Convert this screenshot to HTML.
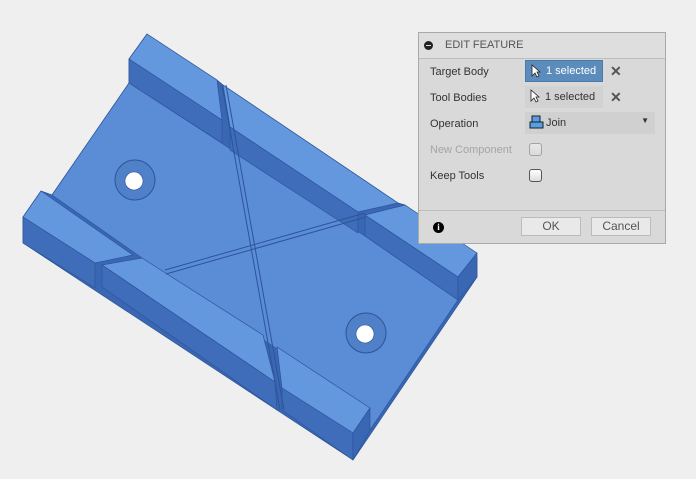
<!DOCTYPE html><html><head><style>
body{margin:0;width:696px;height:479px;background:#efefef;position:relative;overflow:hidden;font-family:"Liberation Sans",sans-serif;font-size:11px;color:#333}
.dlg{position:absolute;left:418px;top:32px;width:248px;height:212px;background:#d9d9d9;border:1px solid #a9a9a9;box-sizing:border-box}
.hd{height:25px;border-bottom:1px solid #bdbdbd;background:#dedede;position:relative}
.hd span{position:absolute;left:26px;top:6px;color:#555}
.min{position:absolute;left:5px;top:8px;width:9px;height:9px;border-radius:50%;background:#222}
.min:after{content:"";position:absolute;left:2px;top:4px;width:5px;height:1px;background:#ddd}
.lb{position:absolute;left:11px}
.fld{position:absolute;left:106px;height:22px;box-sizing:border-box}
.x{position:absolute;left:191px;font-size:14px;color:#555;font-weight:bold}
.cb{position:absolute;left:110px;width:11px;height:11px;border:1px solid #555;border-radius:3px;background:linear-gradient(#fff,#ddd)}
.ft{position:absolute;left:0;right:0;top:177px;border-top:1px solid #bdbdbd}
.btn{position:absolute;top:184px;height:19px;background:#e9e9e9;border:1px solid #bbb;box-sizing:border-box;text-align:center;line-height:17px;font-size:12px;color:#555}
</style></head><body>
<svg width="696" height="479" style="position:absolute;left:0;top:0">
<g stroke="#2d5499" stroke-width="0.7" stroke-linejoin="round">
<polygon fill="#3a67b3" points="147,34 217,80 223,85 398,203 405,205 477,257 477,277 353,460 23,243 23,217 41,191 52,195 129,83 129,59"/>
<polygon fill="#5a8dd6" points="129,83 365,236 458,300 370,430 277,349 142,258 52,195"/>
<polygon fill="#6397de" points="147,34 217,80 222,120 129,59"/>
<polygon fill="#3f6dba" points="129,59 222,120 222,143 129,83"/>
<polygon fill="#6397de" points="223,85 398,203 358,212 230,127"/>
<polygon fill="#3f6dba" points="230,127 358,212 358,233 230,150"/>
<polygon fill="#6397de" points="405,205 477,253 458,277 365,215"/>
<polygon fill="#3f6dba" points="365,215 458,277 458,300 365,236"/>
<polygon fill="#3a67b3" points="458,277 477,253 477,277 458,300"/>
<polygon fill="#6397de" points="41,191 133,255 95,263 23,217"/>
<polygon fill="#3f6dba" points="23,217 95,263 95,288 23,243"/>
<polygon fill="#6397de" points="102,265 142,258 263,335 275,382"/>
<polygon fill="#3f6dba" points="102,265 275,382 277,410 102,287"/>
<polygon fill="#6397de" points="277,347 370,408 353,433 282,388"/>
<polygon fill="#3f6dba" points="282,388 353,433 353,460 282,410"/>
<polygon fill="#3a67b3" points="353,433 370,408 370,430 353,460"/>
</g>
<path d="M222,85 L280,410 M226,85 L284,410 M165,270 L365,213 M166,274 L366,217" stroke="#2d5499" stroke-width="1" fill="none"/>
<circle cx="135" cy="180" r="20" fill="#4f80c8" stroke="#2d5499"/><circle cx="134" cy="181" r="9" fill="#fff" stroke="#2d5499" stroke-width="0.6"/>
<circle cx="366" cy="333" r="20" fill="#4f80c8" stroke="#2d5499"/><circle cx="365" cy="334" r="9" fill="#fff" stroke="#2d5499" stroke-width="0.6"/>
</svg>
<div class="dlg">
<div class="hd"><div class="min"></div><span>EDIT FEATURE</span></div>
<div class="lb" style="top:33px">Target Body</div>
<div class="fld" style="top:27px;width:78px;background:#5b8cbc;color:#fff;border:1px solid #4a7aa8;padding:4px 0 0 20px">1 selected<svg style="position:absolute;left:5px;top:3px" width="10" height="14"><path d="M1,1 L1,12 L4,9 L6,13 L8,12 L6,8 L9,8 Z" fill="#fff" stroke="#222" stroke-width="0.8"/></svg></div>
<div class="x" style="top:30px">✕</div>
<div class="lb" style="top:59px">Tool Bodies</div>
<div class="fld" style="top:53px;width:78px;background:#d2d2d2;padding:5px 0 0 20px">1 selected<svg style="position:absolute;left:5px;top:3px" width="10" height="14"><path d="M1,1 L1,12 L4,9 L6,13 L8,12 L6,8 L9,8 Z" fill="#fff" stroke="#222" stroke-width="0.8"/></svg></div>
<div class="x" style="top:56px">✕</div>
<div class="lb" style="top:85px">Operation</div>
<div class="fld" style="top:79px;width:130px;background:#d0d0d0;padding:5px 0 0 21px">Join<svg style="position:absolute;left:4px;top:3px" width="15" height="15"><rect x="3" y="1" width="8" height="8" fill="#5a9ee0" stroke="#123" /><rect x="1" y="7" width="13" height="6" fill="#5a9ee0" stroke="#123"/></svg><span style="position:absolute;right:6px;top:4px;font-size:8px">▼</span></div>
<div class="lb" style="top:111px;color:#a5a5a5">New Component</div>
<div class="cb" style="top:110px;opacity:.4"></div>
<div class="lb" style="top:137px">Keep Tools</div>
<div class="cb" style="top:136px"></div>
<div class="ft"></div>
<div style="position:absolute;left:14px;top:189px;width:11px;height:11px;border-radius:50%;background:#000;color:#fff;font-size:9px;font-weight:bold;text-align:center;line-height:11px;font-family:'Liberation Serif',serif">i</div>
<div class="btn" style="left:102px;width:60px">OK</div>
<div class="btn" style="left:172px;width:60px">Cancel</div>
</div>
</body></html>
